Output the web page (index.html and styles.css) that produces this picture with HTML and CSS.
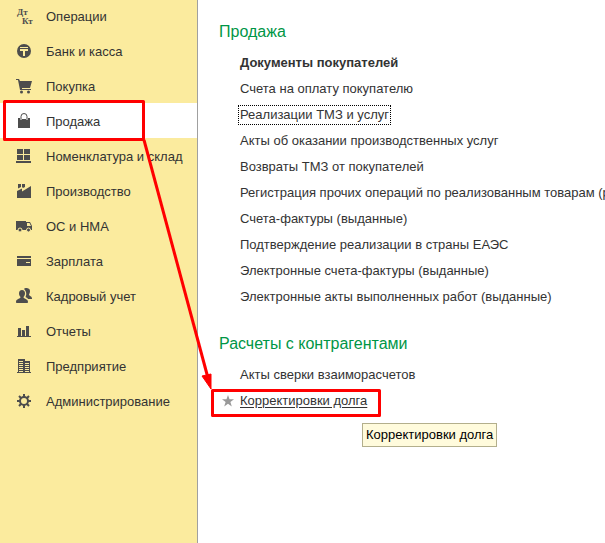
FILE: index.html
```
<!DOCTYPE html>
<html lang="ru">
<head>
<meta charset="utf-8">
<meta name="viewport" content="width=device-width, initial-scale=1">
<title>Продажа</title>
<link rel="stylesheet" href="styles.css">
</head>
<body>
<div class="app">
  <nav class="sidebar" aria-label="Разделы">
    <a class="section" href="#"><svg class="icon" viewBox="0 1 16 17" aria-hidden="true"><text class="icon-text" x="1" y="8">Дт</text><text class="icon-text" x="6" y="17">Кт</text></svg>Операции</a>
    <a class="section" href="#"><svg class="icon" viewBox="0 1 16 17" aria-hidden="true"><circle cx="8" cy="9" r="7"/><path class="cut" d="M4 5h8v1H4zM4 7h8v2H9v5H7V9H4z"/></svg>Банк и касса</a>
    <a class="section" href="#"><svg class="icon" viewBox="0 1 16 17" aria-hidden="true"><path d="M0 2h3l1 2h12l-2 7H6v1h9v1H4L2 3H0z"/><circle cx="5.500" cy="15" r="1.500"/><circle cx="12.500" cy="15" r="1.500"/></svg>Покупка</a>
    <a class="section current" href="#" aria-current="page"><svg class="icon" viewBox="0 1 16 17" aria-hidden="true"><path d="M2 6h12v10H2z"/><path class="halo" d="M5 8V6h6v2"/><path class="line" d="M5 8V4.500a3 3 0 0 1 6 0V8"/></svg>Продажа</a>
    <a class="section" href="#"><svg class="icon" viewBox="0 1 16 17" aria-hidden="true"><path d="M1 2h6v5H1zM8 2h6v5H8zM1 8h6v5H1zM8 8h6v5H8zM0 14h15v2H0z"/></svg>Номенклатура и склад</a>
    <a class="section" href="#"><svg class="icon" viewBox="0 1 16 17" aria-hidden="true"><path d="M1 9l5-2.500V9.500L15 4v12H1zM2 2h3v3L2 6.500zM6 2h3v3L7 6 6 5z"/></svg>Производство</a>
    <a class="section" href="#"><svg class="icon" viewBox="0 1 16 17" aria-hidden="true"><path fill-rule="evenodd" d="M0 4h10v1h4l2 4v4H0zM11 6v3h4l-1.500-3z"/><circle class="wheel" cx="4" cy="13" r="2"/><circle class="wheel" cx="12.500" cy="13" r="2"/></svg>ОС и НМА</a>
    <a class="section" href="#"><svg class="icon" viewBox="0 1 16 17" aria-hidden="true"><path fill-rule="evenodd" d="M1 4h14v2H1zM1 7h14v7H1zM10 10h4v1h-4z"/></svg>Зарплата</a>
    <a class="section" href="#"><svg class="icon" viewBox="0 1 16 17" aria-hidden="true"><path d="M8 2C9 .500 14 .500 14 4c0 1.500-.5 2.500-1 3.500 0 1.500 3 1.500 3 4V12h-4c-.5-1-1.500-1.500-2.500-2 1-2 1.500-5-1.500-8z"/><path d="M6 3c2 0 3 1.500 3 3.500S8 9.500 7.500 10c0 2 4.500 1.500 4.500 5 0 .6-.5 1-1 1H1c-.6 0-1-.4-1-1 0-3.500 4.500-3 4.500-5C4 9.500 3 8.500 3 6.500S4 3 6 3z"/></svg>Кадровый учет</a>
    <a class="section" href="#"><svg class="icon" viewBox="0 1 16 17" aria-hidden="true"><path d="M1 14h1V6h3v8h1V8h3v6h1V4h3v10h2v1H1z"/></svg>Отчеты</a>
    <a class="section" href="#"><svg class="icon" viewBox="0 1 16 17" aria-hidden="true"><path fill-rule="evenodd" d="M1 15h1V2h7v2h5v11h1v1H1zM3 4v1h4V4zM3 6v1h4V6zM3 8v1h4V8zM3 10v1h4v-1zM3 12v1h4v-1zM3 14v1h4v-1zM9 6v1h4V6zM9 8v1h4V8zM9 10v1h4v-1zM9 12v1h4v-1zM9 14v1h4v-1z"/></svg>Предприятие</a>
    <a class="section" href="#"><svg class="icon" viewBox="0 1 16 17" aria-hidden="true"><circle class="line" cx="8" cy="9" r="4"/><path class="line" d="M8 2v3M8 13v3M1 9h3M12 9h3M3 4l2.200 2.200M10.800 11.800L13 14M13 4l-2.200 2.200M5.200 11.800L3 14"/></svg>Администрирование</a>
  </nav>
  <main class="content">
    <section class="group">
      <h2>Продажа</h2>
      <ul>
        <li><a class="strong" href="#">Документы покупателей</a></li>
        <li><a href="#">Счета на оплату покупателю</a></li>
        <li><a class="focused" href="#">Реализации ТМЗ и услуг</a></li>
        <li><a href="#">Акты об оказании производственных услуг</a></li>
        <li><a href="#">Возвраты ТМЗ от покупателей</a></li>
        <li><a href="#">Регистрация прочих операций по реализованным товарам (р</a></li>
        <li><a href="#">Счета-фактуры (выданные)</a></li>
        <li><a href="#">Подтверждение реализации в страны ЕАЭС</a></li>
        <li><a href="#">Электронные счета-фактуры (выданные)</a></li>
        <li><a href="#">Электронные акты выполненных работ (выданные)</a></li>
      </ul>
    </section>
    <section class="group">
      <h2>Расчеты с контрагентами</h2>
      <ul>
        <li><a href="#">Акты сверки взаиморасчетов</a></li>
        <li class="starred"><svg class="star" viewBox="0 0 12 12" aria-hidden="true"><path d="M6 0l1.500 4.300H12L8.400 7l1.400 4.500L6 8.800l-3.800 2.700L3.600 7 0 4.300h4.500z"/></svg><a class="hovered" href="#">Корректировки долга</a></li>
      </ul>
    </section>
  </main>
  <div class="tooltip" role="tooltip">Корректировки долга</div>
  <svg class="marks" aria-hidden="true"><rect x="4.500" y="101.500" width="139" height="38"/><rect x="212.500" y="390.500" width="167" height="25"/><path d="M144 140L208 378"/><path class="head" d="M202 376l9-2 0 15z"/></svg>
</div>
</body>
</html>
```
FILE: styles.css
```
* { box-sizing: border-box; }
body {
  margin: 0;
  background: #fff;
  color: #333;
  font: 13px/16px "Liberation Sans", Arial, sans-serif;
}
a { color: inherit; text-decoration: none; }
.app {
  position: relative;
  display: flex;
  min-height: 100vh;
  overflow: hidden;
}
.sidebar {
  flex: 0 0 198px;
  border-right: 1px solid #a0a0a0;
  background: #fbeb9e;
}
.section {
  display: flex;
  align-items: center;
  gap: 14px;
  height: 35px;
  padding: 2px 0 0 16px;
  white-space: nowrap;
}
.section:first-child { margin-top: -2px; }
.current { background: #fff; }
.icon { flex: none; width: 16px; height: 17px; fill: #4d4d4d; overflow: visible; }
.icon-text { font: bold 9px "Liberation Serif", serif; }
.cut { fill: #fbeb9e; }
.line { fill: none; stroke: #4d4d4d; stroke-width: 2px; }
.current .line { stroke-width: 1px; }
.halo { fill: none; stroke: #fff; stroke-width: 2px; }
.wheel { stroke: #fbeb9e; stroke-width: 1px; }
.content { flex: 1; min-width: 0; padding: 20px 0 0 21px; }
.group { margin-bottom: 22px; }
h2 {
  margin: 0 0 6px;
  color: #009646;
  font-size: 16px;
  font-weight: normal;
  line-height: 24px;
}
ul { margin: 0; padding: 0; list-style: none; }
li {
  display: flex;
  align-items: center;
  height: 26px;
  padding-left: 21px;
  white-space: nowrap;
}
.strong { font-weight: bold; }
.focused { margin-left: -2px; padding: 1px; border: 1px dotted #000; }
.hovered { text-decoration: underline; text-underline-offset: 2px; }
.starred { padding-left: 3px; gap: 6px; }
.star { width: 12px; height: 12px; fill: #999; }
.tooltip {
  position: absolute;
  top: 423px;
  left: 362px;
  padding: 3px;
  border: 1px solid #b3af8c;
  background: #fffbdc;
  color: #000;
}
.marks {
  position: absolute;
  top: 0;
  left: 0;
  width: 100%;
  height: 100%;
  fill: none;
  stroke: #f00;
  stroke-width: 3px;
  stroke-linejoin: round;
  pointer-events: none;
}
.head { fill: #f00; stroke-width: 1px; }
```
